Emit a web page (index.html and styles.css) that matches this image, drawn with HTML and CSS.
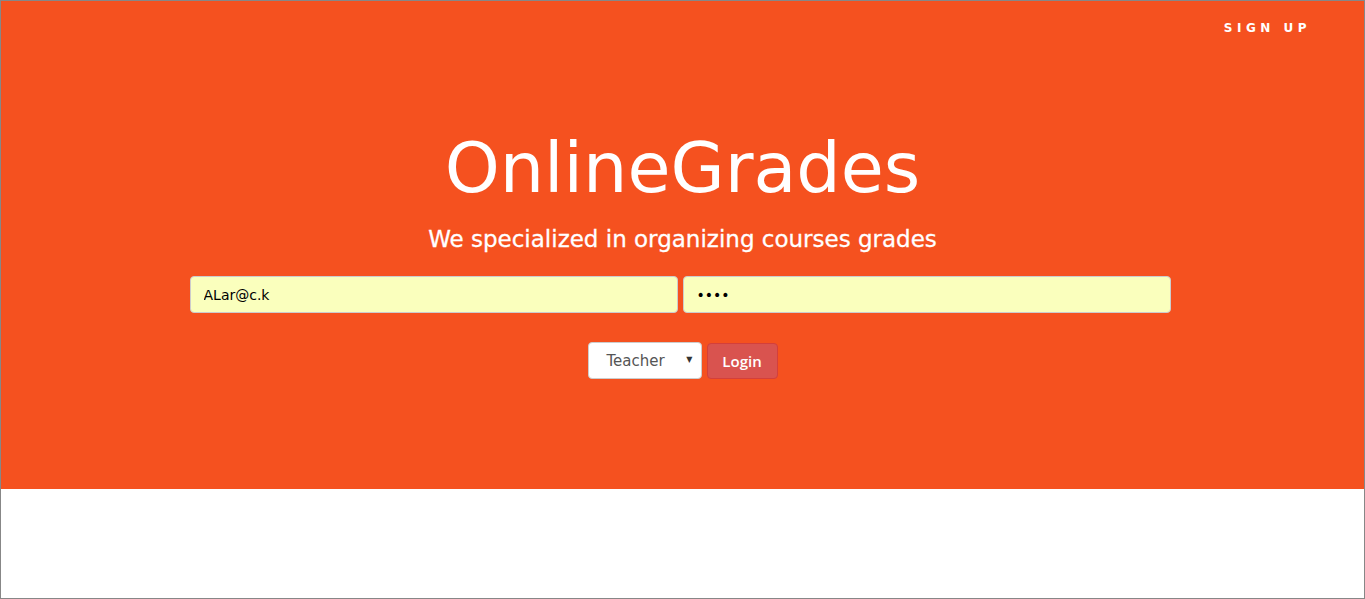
FILE: index.html
```html
<!DOCTYPE html>
<html>
<head>
<meta charset="utf-8">
<link rel="stylesheet" href="styles.css">
</head>
<body>
<div class="frame">
  <header class="hero">
    <nav class="nav"><a class="nav-link" href="#">SIGN UP</a></nav>
    <div class="intro">
      <h1 class="title">OnlineGrades</h1>
      <p class="subtitle">We specialized in organizing courses grades</p>
      <form class="login">
        <div class="fields">
          <input class="field" type="text" value="ALar@c.k">
          <input class="field" type="password" value="abcd">
        </div>
        <div class="actions">
          <div class="select">Teacher<span class="caret">▼</span></div>
          <button class="btn" type="button">Login</button>
        </div>
      </form>
    </div>
  </header>
  <main class="content"></main>
</div>
</body>
</html>
```

FILE: styles.css
```css
html, body { margin: 0; padding: 0; }
body { font-family: "DejaVu Sans", "Noto Sans", sans-serif; background: #fff; }
.frame {
  height: 599px;
  box-sizing: border-box;
  border: 1px solid #878787;
  display: flex;
  flex-direction: column;
}
.hero {
  background: #f5511f;
  height: 488px;
  display: flex;
  flex-direction: column;
}
.nav {
  display: flex;
  justify-content: flex-end;
  padding: 20px 53px 0 0;
}
.nav-link {
  color: #fff;
  text-decoration: none;
  font-size: 12px;
  font-weight: bold;
  letter-spacing: 4.5px;
}
.intro {
  display: flex;
  flex-direction: column;
  align-items: center;
  padding-top: 93px;
}
.title {
  margin: 0;
  color: #fff;
  font-weight: normal;
  font-size: 70px;
  line-height: 80px;
}
.subtitle {
  margin: 16px 0 0;
  color: #fff;
  font-size: 23px;
  font-weight: 500;
  line-height: 30px;
  -webkit-text-stroke: 0.3px #fff;
}
.login { margin-top: 22px; display: flex; flex-direction: column; align-items: center; }
.fields { display: flex; gap: 5px; margin-right: 5px; }
.field {
  width: 488px;
  height: 37px;
  box-sizing: border-box;
  background: #faffbd;
  border: 1px solid #ccc;
  border-radius: 4px;
  padding: 0 13px;
  font-family: "DejaVu Sans", sans-serif;
  font-size: 14px;
  color: #000;
  outline: none;
}
.actions { display: flex; gap: 5px; margin-top: 29px; align-items: flex-start; }
.select {
  width: 114px;
  height: 37px;
  box-sizing: border-box;
  background: #fff;
  border: 1px solid #ccc;
  border-radius: 4px;
  color: #555;
  font-size: 15px;
  display: flex;
  align-items: center;
  padding-left: 18px;
  position: relative;
}
.caret {
  position: absolute;
  right: 8px;
  top: 12px;
  font-size: 8px;
  color: #333;
}
.btn {
  margin-top: 1px;
  width: 71px;
  height: 36px;
  box-sizing: border-box;
  background: #d9534f;
  border: 1px solid #d43f3a;
  border-radius: 4px;
  color: #fff;
  font-family: "Open Sans", "DejaVu Sans", sans-serif;
  font-weight: 600;
  font-size: 15px;
  padding: 0;
}
.content { flex: 1; background: #fff; }
```
